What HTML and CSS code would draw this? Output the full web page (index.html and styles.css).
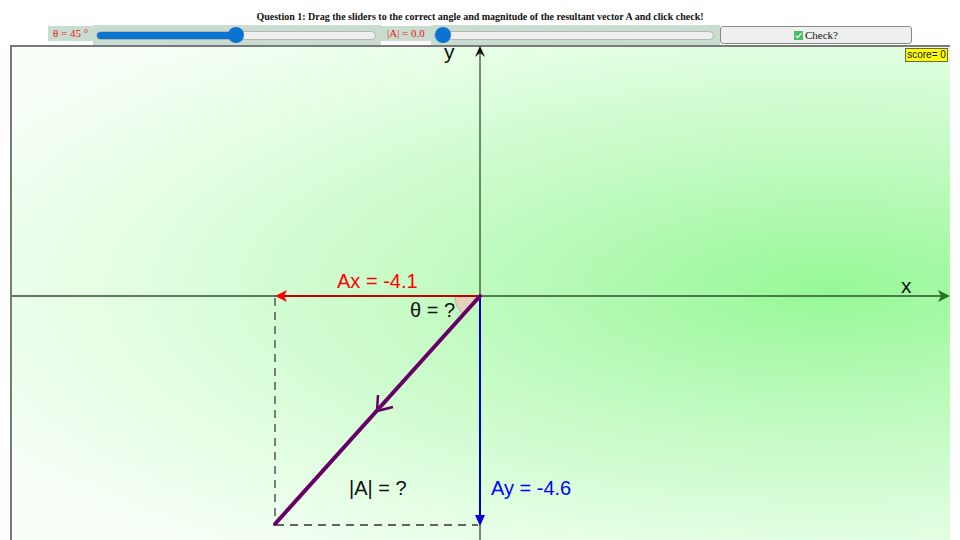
FILE: index.html
```html
<!DOCTYPE html>
<html>
<head>
<meta charset="utf-8">
<link rel="stylesheet" href="styles.css">
</head>
<body>
<div class="app">
  <div class="question">Question 1: Drag the sliders to the correct angle and magnitude of the resultant vector A and click check!</div>
  <div class="controls">
    <span class="label label-theta">θ = 45 °</span>
    <div class="slider-wrap"><input type="range" class="slider" min="0" max="90" value="45" style="--p:50%"></div>
    <span class="label label-mag">|A| = 0.0</span>
    <div class="slider-wrap"><input type="range" class="slider" min="0" max="10" step="0.1" value="0" style="--p:0%"></div>
    <button class="check"><svg class="tick" viewBox="0 0 10 10" width="10" height="10"><rect x="0" y="0" width="10" height="10" fill="#4cbf6a"/><path d="M2 5.2 L4.2 7.3 L8.2 2.6" fill="none" stroke="#fff" stroke-width="1.4"/></svg>Check?</button>
  </div>
  <div class="canvas">
    <svg class="plot" viewBox="12 47 938 493" width="938" height="493">
      <!-- axes -->
      <line x1="12" y1="296" x2="944" y2="296" stroke="#2f4f2f" stroke-width="1.3"/>
      <path d="M950 296 L938 290 L941 296 L938 302 Z" fill="#1f7a1f"/>
      <line x1="480" y1="52" x2="480" y2="540" stroke="#111" stroke-width="1"/>
      <path d="M480 46 L475 57 L480 53 L485 57 Z" fill="#111"/>
      <text class="axis-label" x="901" y="293">x</text>
      <text class="axis-label" x="444" y="59">y</text>
      <!-- angle wedge -->
      <path d="M480 296 L455 296 A25 25 0 0 0 463.3 314.6 Z" fill="#e2d3bd" stroke="#d9aaa2" stroke-width="1"/>
      <!-- dashed helper lines -->
      <line x1="275" y1="298" x2="275" y2="525" stroke="#555" stroke-width="1.5" stroke-dasharray="8 6"/>
      <line x1="276" y1="525" x2="478" y2="525" stroke="#333" stroke-width="1.3" stroke-dasharray="8 6"/>
      <!-- Ax -->
      <line x1="480" y1="296" x2="284" y2="296" stroke="#c40000" stroke-width="2"/>
      <path d="M275 296 L287 290 L284 296 L287 302 Z" fill="#ff0000"/>
      <text class="lbl ax" x="337" y="288">Ax = -4.1</text>
      <!-- Ay -->
      <line x1="480" y1="296" x2="480" y2="515" stroke="#0000cc" stroke-width="2"/>
      <path d="M480 526 L475 515 L485 515 Z" fill="#0000dd"/>
      <text class="lbl ay" x="491" y="495">Ay = -4.6</text>
      <!-- vector A -->
      <line x1="480" y1="296" x2="275" y2="524" stroke="#660066" stroke-width="4" stroke-linecap="round"/>
      <path d="M378 395 L377 411 L393 407" fill="none" stroke="#660066" stroke-width="2.5"/>
      <text class="lbl" x="410" y="317">θ = ?</text>
      <text class="lbl" x="349" y="495">|A| = ?</text>
    </svg>
    <div class="score">score= 0</div>
  </div>
</div>
</body>
</html>
```

FILE: styles.css
```css
html, body {
  margin: 0;
  padding: 0;
  background: #ffffff;
}

.app {
  width: 960px;
  height: 540px;
  overflow: hidden;
}

.question {
  height: 25px;
  box-sizing: border-box;
  padding-top: 10px;
  text-align: center;
  font-family: "Liberation Serif", "DejaVu Serif", serif;
  font-size: 10px;
  font-weight: bold;
  color: #111;
  line-height: 13px;
}

.controls {
  display: flex;
  align-items: flex-start;
  height: 20px;
  margin-left: 48px;
}

.label {
  height: 15px;
  margin-top: 1px;
  background: #c8dcd0;
  color: #f01010;
  font-family: "Liberation Serif", "DejaVu Serif", serif;
  font-size: 11px;
  line-height: 15px;
  box-sizing: border-box;
  padding-left: 5px;
  white-space: nowrap;
}

.label-theta {
  width: 45px;
}

.label-mag {
  width: 50px;
  padding-left: 6px;
}

.slider-wrap {
  height: 20px;
  width: 288px;
  background: #c8dcd0;
  display: flex;
  align-items: center;
  padding-left: 3px;
  box-sizing: border-box;
}

.slider-wrap + .label + .slider-wrap {
  width: 289px;
}

.slider {
  -webkit-appearance: none;
  appearance: none;
  width: 280px;
  height: 16px;
  margin: 0;
  padding: 0;
  background: transparent;
}

.slider::-webkit-slider-runnable-track {
  height: 9px;
  border-radius: 5px;
  border: 1px solid #b5b5b5;
  box-sizing: border-box;
  background: linear-gradient(to right, #0a74d1 var(--p), #efefef var(--p));
}

.slider::-webkit-slider-thumb {
  -webkit-appearance: none;
  appearance: none;
  width: 16px;
  height: 16px;
  border-radius: 50%;
  background: #0b74d2;
  border: none;
  margin-top: -4.5px;
}

.check {
  width: 192px;
  height: 18px;
  margin-top: 1px;
  border: 1px solid #8a8a8a;
  border-radius: 3px;
  background: #efefef;
  font-family: "Liberation Serif", "DejaVu Serif", serif;
  font-size: 11px;
  color: #111;
  display: flex;
  align-items: center;
  justify-content: center;
  padding: 0;
  box-sizing: border-box;
}

.tick {
  width: 9px;
  height: 9px;
  margin-right: 2px;
}

.canvas {
  position: relative;
  margin-left: 10px;
  width: 940px;
  height: 495px;
  box-sizing: border-box;
  border-top: 2px solid #7a7a7a;
  border-left: 2px solid #7a7a7a;
  background:
    radial-gradient(ellipse 950px 340px at 818px 243px, #95f995 0%, #adf9ad 20%, #c7fbc7 45%, #e3fee3 75%, #f7fff7 100%);
}

.plot {
  display: block;
  overflow: visible;
}

.lbl {
  font-family: "Liberation Sans", Arial, sans-serif;
  font-size: 20px;
  fill: #111;
}

.ax {
  fill: #ff0000;
}

.ay {
  fill: #0000ff;
}

.axis-label {
  font-family: "Liberation Sans", Arial, sans-serif;
  font-size: 21px;
  fill: #111;
}

.score {
  position: absolute;
  top: 1px;
  right: 2px;
  width: 43px;
  height: 14px;
  box-sizing: border-box;
  background: #ffff00;
  border: 1px solid #666;
  font-family: "Liberation Sans", Arial, sans-serif;
  font-size: 10px;
  line-height: 12px;
  text-align: center;
  color: #111;
}
```
